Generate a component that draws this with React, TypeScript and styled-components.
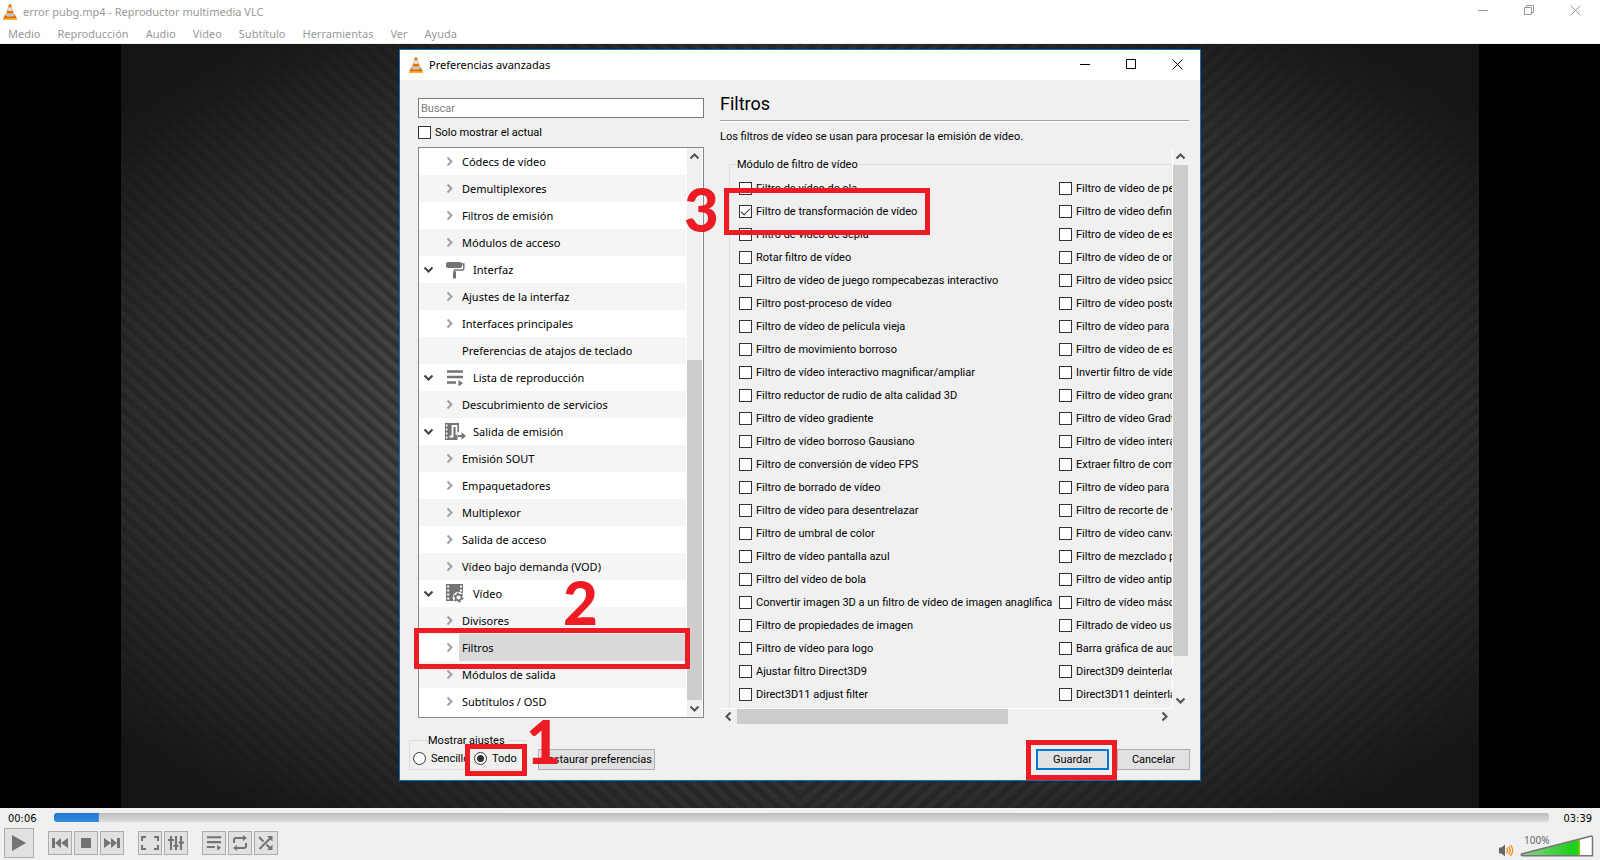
import React from 'react';
import styled, { createGlobalStyle, css } from 'styled-components';

const GlobalStyle = createGlobalStyle`
  *, *::before, *::after { box-sizing: border-box; }
  body { margin: 0; background: #000; }
  button, input { font: inherit; color: inherit; margin: 0; }
`;

const uiFont = "'Noto Sans', 'Open Sans', sans-serif";
const dialogFont = "Roboto, 'Noto Sans', sans-serif";
const timeFont = "'DejaVu Sans Condensed', 'Noto Sans', sans-serif";

/* ---------- main window ---------- */

const Window = styled.div`
  display: flex;
  flex-direction: column;
  min-height: 100vh;
  font: 11px/16px ${uiFont};
  color: #000;
`;

const TitleBar = styled.header`
  display: flex;
  align-items: center;
  height: 24px;
  padding: 0 2px 0 3px;
  background: #fff;
  color: #999;
`;

const Title = styled.h1`
  flex: 1;
  margin: 0 0 0 6px;
  font-size: 11px;
  font-weight: 400;
`;

const WindowButton = styled.button`
  display: grid;
  place-items: center;
  align-self: flex-start;
  width: 46px;
  height: 20px;
  padding: 0;
  border: 0;
  background: none;
`;

const MenuBar = styled.nav`
  display: flex;
  gap: 1px;
  height: 20px;
  background: #fff;
  border-bottom: 1px solid #f0f0f0;
`;

const MenuItem = styled.button`
  padding: 0 8px;
  border: 0;
  background: none;
  color: #999;
`;

const Stage = styled.main`
  position: relative;
  flex: 1;
  display: flex;
  justify-content: center;
  align-items: flex-start;
  padding: 5px 0 27px;
  background: #000;
`;

const Video = styled.div`
  position: absolute;
  inset: 0;
  margin: auto;
  height: 100%;
  max-width: 100%;
  aspect-ratio: 16 / 9;
  display: flex;
  background: #303030;

  &::after {
    content: '';
    position: absolute;
    inset: 0;
    background: radial-gradient(ellipse 64% 66% at center, transparent 35%, rgba(26, 26, 26, 0.6) 75%, #151515 100%);
  }
`;

const VideoHalf = styled.div<{ $angle: number }>`
  flex: 1;
  background: repeating-linear-gradient(
    ${(p) => p.$angle}deg,
    rgba(255, 255, 255, 0.01) 0,
    rgba(255, 255, 255, 0.17) 6px,
    rgba(255, 255, 255, 0.01) 11px
  );
`;

/* ---------- dialog ---------- */

const Dialog = styled.section`
  position: relative;
  width: min(802px, 100%);
  border: 1px solid #1a6cb0;
  background: #f0f0f0;
  font: 11px/15px ${dialogFont};
`;

const DialogBar = styled.header`
  display: flex;
  align-items: center;
  height: 30px;
  padding-left: 9px;
  background: #fff;

  ${WindowButton} {
    height: 28px;
  }
`;

const DialogTitle = styled.h2`
  flex: 1;
  margin: 0 0 0 6px;
  font: 11px/16px ${uiFont};
`;

const DialogBody = styled.div`
  display: flex;
  gap: 16px;
  padding: 0 11px 0 18px;
`;

const Sidebar = styled.div`
  flex: 0 0 286px;
  display: flex;
  flex-direction: column;
  gap: 8px;
  padding-top: 18px;
`;

const SearchInput = styled.input`
  width: 100%;
  height: 20px;
  padding: 1px 2px 0;
  border: 1px solid #7a7a7a;
  outline: 0;
  background: #fff;

  &::placeholder {
    color: #808080;
    opacity: 1;
  }
`;

const Choice = styled.label<{ $gap: number }>`
  display: flex;
  align-items: center;
  gap: ${(p) => p.$gap}px;
  height: 13px;
  white-space: nowrap;
`;

const box = css`
  appearance: none;
  flex: none;
  display: grid;
  place-content: center;
  width: 13px;
  height: 13px;
  border: 1px solid #333;
  background: #fff;
`;

const CheckBox = styled.input`
  ${box}

  &:checked::after {
    content: '';
    width: 9px;
    height: 5px;
    margin-bottom: 3px;
    border: solid #333;
    border-width: 0 0 1px 1px;
    transform: rotate(-45deg);
  }
`;

const Radio = styled.input`
  ${box}
  border-radius: 50%;

  &:checked::after {
    content: '';
    width: 7px;
    height: 7px;
    border-radius: 50%;
    background: #333;
  }
`;

const TreeFrame = styled.div`
  display: flex;
  padding-right: 1px;
  border: 1px solid #828790;
  background: #fff;
`;

const Tree = styled.ul`
  flex: 1;
  margin: 0 1px 0 0;
  padding: 0 0 2px;
  list-style: none;
  font: 11px/27px ${uiFont};
`;

const TreeRow = styled.li<{ $child: boolean }>`
  display: flex;
  height: 27px;
  padding-left: ${(p) => (p.$child ? 20 : 0)}px;

  &:nth-child(even) {
    background: #f5f5f5;
  }
`;

const TreeArrow = styled.span<{ $width: number }>`
  flex: 0 0 ${(p) => p.$width}px;
  display: grid;
  place-items: center;
`;

const TreeIcon = styled.span`
  display: grid;
  place-items: center;
  width: 24px;
  margin: 0 6px 0 6px;
`;

const TreeLabel = styled.span<{ $child: boolean; $selected: boolean }>`
  flex: 1;
  padding-left: ${(p) => (p.$child ? 3 : 0)}px;
  background: ${(p) => (p.$selected ? '#d9d9d9' : 'none')};
`;

const ScrollBar = styled.div<{ $horizontal?: boolean }>`
  display: flex;
  flex-direction: ${(p) => (p.$horizontal ? 'row' : 'column')};
  ${(p) => (p.$horizontal ? 'height' : 'width')}: 15px;
  background: #f0f0f0;
`;

const ScrollButton = styled.button`
  display: grid;
  place-items: center;
  flex: 0 0 17px;
  padding: 0;
  border: 0;
  background: none;
`;

const ScrollSpace = styled.div<{ $grow: number }>`
  flex: ${(p) => p.$grow} 1 0;
`;

const ScrollThumb = styled(ScrollSpace)`
  background: #cdcdcd;
`;

const Panel = styled.div`
  flex: 1;
  min-width: 0;
  padding-top: 10px;
`;

const PanelTitle = styled.h3`
  margin: 0 0 2px;
  font-size: 18px;
  font-weight: 400;
  line-height: 28px;
`;

const Rule = styled.hr`
  height: 2px;
  margin: 0 0 7px;
  border: solid;
  border-width: 1px 0;
  border-color: #a0a0a0 #fff #fff;
`;

const PanelText = styled.p`
  margin: 0 0 3px;
  line-height: 16px;
`;

const ScrollArea = styled.div`
  display: grid;
  grid-template-columns: minmax(0, 1fr) 15px;
  padding-right: 1px;
`;

const View = styled.div`
  overflow: hidden;
  padding: 9px 0 0 9px;
  border: solid #fff;
  border-width: 0 1px 1px 0;
`;

const ModuleGroup = styled.fieldset`
  width: 640px;
  margin: 0;
  padding: 5px 0 2px 9px;
  border: solid #dcdcdc;
  border-width: 1px 0 0 1px;
`;

const Legend = styled.legend<{ $indent: number }>`
  margin-left: ${(p) => p.$indent}px;
  padding: 0 2px 0 1px;
`;

const ModuleColumns = styled.div`
  display: grid;
  grid-template-columns: 320px 320px;
`;

const ModuleColumn = styled.div`
  display: grid;
  grid-auto-rows: 23px;
  align-items: center;
`;

const DialogFooter = styled.footer`
  display: flex;
  align-items: flex-end;
  height: 56px;
  padding: 0 10px 10px 9px;
`;

const ModeGroup = styled.fieldset`
  display: block;
  width: 116px;
  margin: 0 13px 0 0;
  padding: 4px 3px;
  border: 1px solid #dcdcdc;
`;

const ModeOptions = styled.div`
  display: grid;
  grid-template-columns: 61px auto;
`;

const PushButton = styled.button<{ $width: number; $primary?: boolean }>`
  width: ${(p) => p.$width}px;
  height: 21px;
  padding: 0;
  border: ${(p) => (p.$primary ? '2px solid #0078d7' : '1px solid #adadad')};
  background: #e1e1e1;
  white-space: nowrap;
`;

const FooterActions = styled.div`
  display: flex;
  gap: 8px;
  margin-left: auto;
`;

/* ---------- tutorial marks drawn over the dialog ---------- */

const Mark = styled.div<{ $x: number; $y: number; $w: number; $h: number }>`
  position: absolute;
  left: ${(p) => p.$x}px;
  top: ${(p) => p.$y}px;
  width: ${(p) => p.$w}px;
  height: ${(p) => p.$h}px;
  border: 5px solid #ed1c24;
  pointer-events: none;
`;

const Step = styled.span<{ $x: number; $y: number }>`
  position: absolute;
  left: ${(p) => p.$x}px;
  top: ${(p) => p.$y}px;
  color: #ed1c24;
  font: 900 60px/60px Lato, sans-serif;
  pointer-events: none;
`;

/* ---------- player controls ---------- */

const Controls = styled.footer`
  height: 52px;
  padding-top: 2px;
  background: #f0f0f0;
`;

const SeekRow = styled.div`
  display: flex;
  align-items: center;
  height: 16px;
  padding: 0 8px;
  font: 11px/16px ${timeFont};
`;

const Time = styled.time`
  width: 46px;
  margin-top: 2px;

  &:last-child {
    width: 43px;
    text-align: right;
  }
`;

const Seek = styled.input<{ $played: number }>`
  appearance: none;
  flex: 1;
  min-width: 0;
  height: 9px;
  margin-bottom: 2px;
  border-radius: 3px;
  background:
    linear-gradient(#2378cc, #318ae0) 0 0 / ${(p) => p.$played}% 100% no-repeat,
    linear-gradient(#bcbcbc, #dedede);

  &::-webkit-slider-thumb {
    appearance: none;
    width: 0;
    height: 0;
  }
`;

const ButtonRow = styled.div`
  display: flex;
  align-items: center;
  height: 34px;
  padding: 0 6px 0 4px;
`;

const ButtonGroup = styled.div`
  display: flex;
  gap: 2px;
  margin-right: 14px;
`;

const ToolButton = styled.button<{ $size: number }>`
  display: grid;
  place-items: center;
  width: ${(p) => p.$size}px;
  height: ${(p) => p.$size}px;
  padding: 0;
  border: 1px solid #adadad;
  background: #e1e1e1;
`;

const Volume = styled.div`
  display: flex;
  align-items: flex-end;
  gap: 6px;
  margin-left: auto;
`;

const MuteButton = styled.button`
  display: block;
  height: 13px;
  padding: 0;
  border: 0;
  background: none;
`;

const VolumeMeter = styled.label`
  position: relative;
  width: 74px;
  height: 28px;
  padding: 5px 0 0 4px;
  color: #666;
  font: 10px/12px ${uiFont};

  svg,
  input {
    position: absolute;
    left: 0;
    bottom: 0;
  }

  input {
    width: 74px;
    height: 22px;
    opacity: 0;
  }
`;

/* ---------- icons ---------- */

const Cone = () => (
  <svg width="14" height="16" viewBox="0 0 14 16" aria-hidden="true">
    <path d="M2 10.500h10l1.800 4.200q.2 1.300-1 1.300H1.200q-1.200 0-1-1.300z" fill="#e06c00" />
    <path d="M.4 14.200h13.200l.3.800q0 1-1 1H1.100q-1 0-1-1z" fill="#ffb030" />
    <path d="M6 .6q1-1 2 0l3.600 11.400q-4.600 2.600-9.200 0z" fill="#ea7200" />
    <path d="M5.200 3.200h3.600l1 3.200q-2.800 1.200-5.600 0z" fill="#dcdcdc" />
    <path d="M3.400 8.800q3.600 1.600 7.200 0l.9 2.900q-4.500 2.200-9 0z" fill="#c4c4c4" />
  </svg>
);

const Chevron = ({ turn, color = '#505050' }: { turn: number; color?: string }) => (
  <svg width="11" height="11" viewBox="0 0 11 11" aria-hidden="true">
    <path d="M1.500 3.500 5.500 7.500 9.500 3.500" transform={`rotate(${turn} 5.500 5.500)`} fill="none" stroke={color} strokeWidth="2" />
  </svg>
);

const Minimize = ({ color }: { color: string }) => (
  <svg width="10" height="10"><path d="M0 5.500h10" stroke={color} /></svg>
);
const Maximize = ({ color }: { color: string }) => (
  <svg width="10" height="10"><path d="M.5.5h9v9h-9z" fill="none" stroke={color} /></svg>
);
const Restore = ({ color }: { color: string }) => (
  <svg width="10" height="10"><path d="M.5 2.500h7v7h-7zM2.500 2.500v-2h7v7h-2" fill="none" stroke={color} /></svg>
);
const Close = ({ color }: { color: string }) => (
  <svg width="11" height="11"><path d="M.5.5l10 10M10.500.5l-10 10" fill="none" stroke={color} /></svg>
);

const gray = '#737373';

const Roller = () => (
  <svg width="20" height="18" viewBox="0 0 20 18">
    <rect x="1" y="1" width="16" height="6" rx="2" fill={gray} />
    <path d="M16 3h2.800v4.500q0 1.500-1.500 1.500H9.500v3" fill="none" stroke={gray} strokeWidth="1.500" />
    <rect x="8" y="10.500" width="3" height="7" fill={gray} />
  </svg>
);
const Playlist = ({ size = 18 }: { size?: number }) => (
  <svg width={size} height={size} viewBox="0 0 18 18">
    <path d="M1 2.500h16M1 8h16M1 13.500h9" stroke={gray} strokeWidth="2.400" />
    <path d="M12.500 11v6.500l4.500-3.200z" fill={gray} />
  </svg>
);
const FilmBase = () => (
  <path
    fill={gray}
    fillRule="evenodd"
    d="M0 0h17v17H0zM1.200 1.500v2h2v-2zM1.200 5.500v2h2v-2zM1.200 9.500v2h2v-2zM1.200 13.500v2h2v-2zM14 1.500v2h2v-2zM14 5.500v2h2v-2z"
  />
);
const StreamOut = () => (
  <svg width="22" height="18" viewBox="0 0 22 18">
    <path
      fill={gray}
      fillRule="evenodd"
      d="M1 0h14v17H1zM2 1.500v2h1.500v-2zM2 5.500v2h1.500v-2zM2 9.500v2h1.500v-2zM2 13.500v2h1.500v-2z"
    />
    <path d="M5.500 13.500h3V3h4v9" fill="none" stroke="#fff" strokeWidth="1.800" />
    <path d="M13.500 9h9v9h-9z" fill="#fff" />
    <path d="M14 12h3.500V9.300L22 13l-4.500 3.700V14H14z" fill={gray} />
  </svg>
);
const VideoGear = () => (
  <svg width="18" height="19" viewBox="0 0 18 19">
    <FilmBase />
    <circle cx="12.500" cy="13.500" r="5.800" fill="#fff" />
    <circle cx="12.500" cy="13.500" r="2.900" fill="none" stroke={gray} strokeWidth="1.600" />
    <circle cx="12.500" cy="13.500" r="4.200" fill="none" stroke={gray} strokeWidth="1.600" strokeDasharray="2.200 2.200" />
  </svg>
);

const Play = () => <svg width="14" height="16"><path d="M0 0v16l14-8z" fill={gray} /></svg>;
const Previous = () => (
  <svg width="16" height="10"><path d="M0 0h3v10H0zM9 0v10L3 5zM16 0v10L9 5z" fill={gray} /></svg>
);
const Next = () => (
  <svg width="16" height="10"><path d="M13 0h3v10h-3zM7 0v10l6-5zM0 0v10l7-5z" fill={gray} /></svg>
);
const Stop = () => <svg width="10" height="10"><path d="M0 0h10v10H0z" fill={gray} /></svg>;
const Fullscreen = () => (
  <svg width="18" height="14"><path d="M1 5V1h4M13 1h4v4M17 9v4h-4M5 13H1V9" fill="none" stroke={gray} strokeWidth="2.200" /></svg>
);
const Equalizer = () => (
  <svg width="16" height="14">
    <path d="M3 0v14M8 0v14M13 0v14M0 4h6M5.500 10h5M10.500 6.500h5.500" fill="none" stroke={gray} strokeWidth="2.200" />
  </svg>
);
const Loop = () => (
  <svg width="16" height="16">
    <path d="M2 8V5q0-2 2-2h8M14 8v3q0 2-2 2H4" fill="none" stroke={gray} strokeWidth="2" />
    <path d="M11 0v6l4-3zM5 10v6l-4-3z" fill={gray} />
  </svg>
);
const Shuffle = () => (
  <svg width="16" height="14">
    <path d="M1 1l4.500 4.500M8.500 8.500L13 13M1.500 13L13 1.500" fill="none" stroke={gray} strokeWidth="2" />
    <path d="M9 0h5.500v5.500zM9 14h5.500V8.500z" fill={gray} />
  </svg>
);
const Speaker = () => (
  <svg width="15" height="13" viewBox="0 0 15 13">
    <path d="M0 3.500h2.500L6 .5v12l-3.500-3H0z" fill="#666" />
    <path d="M7.500 4q2 2.500 0 5M9.500 2.500q3.200 4 0 8M11.500 1q4.500 5.500 0 11" fill="none" stroke="#f58f1a" strokeWidth="1.300" />
  </svg>
);
const VolumeWedge = () => (
  <svg width="74" height="22" viewBox="0 0 74 22">
    <defs>
      <linearGradient id="level">
        <stop offset="0" stopColor="#8fcf8f" />
        <stop offset="0.850" stopColor="#1fd01f" />
        <stop offset="0.960" stopColor="#1fd01f" />
        <stop offset="1" stopColor="#a8c800" />
      </linearGradient>
    </defs>
    <path d="M1 19.500 60 4.500v16.500H1z" fill="url(#level)" />
    <path d="M60 4.500 72.500 1.300V21H60z" fill="#fff" />
    <path d="M1.500 19 70.500 1.200q2-.4 2 1.300V20.800H3q-2.500-.3-1.500-1.800z" fill="none" stroke="#757575" strokeWidth="1.500" />
  </svg>
);

/* ---------- data ---------- */

const menus = ['Medio', 'Reproducción', 'Audio', 'Vídeo', 'Subtítulo', 'Herramientas', 'Ver', 'Ayuda'];

type Node = { label: string; icon?: React.ReactNode; leaf?: boolean; selected?: boolean };

const tree: Node[] = [
  { label: 'Códecs de vídeo' },
  { label: 'Demultiplexores' },
  { label: 'Filtros de emisión' },
  { label: 'Módulos de acceso' },
  { label: 'Interfaz', icon: <Roller /> },
  { label: 'Ajustes de la interfaz' },
  { label: 'Interfaces principales' },
  { label: 'Preferencias de atajos de teclado', leaf: true },
  { label: 'Lista de reproducción', icon: <Playlist /> },
  { label: 'Descubrimiento de servicios' },
  { label: 'Salida de emisión', icon: <StreamOut /> },
  { label: 'Emisión SOUT' },
  { label: 'Empaquetadores' },
  { label: 'Multiplexor' },
  { label: 'Salida de acceso' },
  { label: 'Vídeo bajo demanda (VOD)' },
  { label: 'Vídeo', icon: <VideoGear /> },
  { label: 'Divisores' },
  { label: 'Filtros', selected: true },
  { label: 'Módulos de salida' },
  { label: 'Subtítulos / OSD' },
];

const modules: string[][] = [
  [
    'Filtro de vídeo de ola',
    'Filtro de transformación de vídeo',
    'Filtro de vídeo de sepia',
    'Rotar filtro de vídeo',
    'Filtro de vídeo de juego rompecabezas interactivo',
    'Filtro post-proceso de vídeo',
    'Filtro de vídeo de película vieja',
    'Filtro de movimiento borroso',
    'Filtro de vídeo interactivo magnificar/ampliar',
    'Filtro reductor de rudio de alta calidad 3D',
    'Filtro de vídeo gradiente',
    'Filtro de vídeo borroso Gausiano',
    'Filtro de conversión de vídeo FPS',
    'Filtro de borrado de vídeo',
    'Filtro de vídeo para desentrelazar',
    'Filtro de umbral de color',
    'Filtro de vídeo pantalla azul',
    'Filtro del vídeo de bola',
    'Convertir imagen 3D a un filtro de vídeo de imagen anaglífica',
    'Filtro de propiedades de imagen',
    'Filtro de vídeo para logo',
    'Ajustar filtro Direct3D9',
    'Direct3D11 adjust filter',
  ],
  [
    'Filtro de vídeo de perspectiva',
    'Filtro de vídeo definido',
    'Filtro de vídeo de escalado',
    'Filtro de vídeo de orden',
    'Filtro de vídeo psicodélico',
    'Filtro de vídeo posterizado',
    'Filtro de vídeo para movimiento',
    'Filtro de vídeo de espejo',
    'Invertir filtro de vídeo',
    'Filtro de vídeo grande',
    'Filtro de vídeo Gradfun',
    'Filtro de vídeo interactivo',
    'Extraer filtro de componente',
    'Filtro de vídeo para color',
    'Filtro de recorte de vídeo',
    'Filtro de vídeo canvas',
    'Filtro de mezclado para vídeo',
    'Filtro de vídeo antiparpadeo',
    'Filtro de vídeo máscara alfa',
    'Filtrado de vídeo usando',
    'Barra gráfica de audio',
    'Direct3D9 deinterlace filter',
    'Direct3D11 deinterlace filter',
  ],
];

/* ---------- page ---------- */

export default function App() {
  return (
    <Window>
      <GlobalStyle />
      <TitleBar>
        <Cone />
        <Title>error pubg.mp4 - Reproductor multimedia VLC</Title>
        <WindowButton aria-label="Minimizar"><Minimize color="#999" /></WindowButton>
        <WindowButton aria-label="Restaurar"><Restore color="#999" /></WindowButton>
        <WindowButton aria-label="Cerrar"><Close color="#999" /></WindowButton>
      </TitleBar>
      <MenuBar>
        {menus.map((m) => <MenuItem key={m}>{m}</MenuItem>)}
      </MenuBar>

      <Stage>
        <Video>
          <VideoHalf $angle={42} />
          <VideoHalf $angle={-42} />
        </Video>

        <Dialog role="dialog" aria-label="Preferencias avanzadas">
          <DialogBar>
            <Cone />
            <DialogTitle>Preferencias avanzadas</DialogTitle>
            <WindowButton aria-label="Minimizar"><Minimize color="#000" /></WindowButton>
            <WindowButton aria-label="Maximizar"><Maximize color="#000" /></WindowButton>
            <WindowButton aria-label="Cerrar"><Close color="#000" /></WindowButton>
          </DialogBar>

          <DialogBody>
            <Sidebar>
              <SearchInput placeholder="Buscar" aria-label="Buscar" />
              <Choice $gap={4}>
                <CheckBox type="checkbox" />
                Solo mostrar el actual
              </Choice>
              <TreeFrame>
                <Tree role="tree">
                  {tree.map((n) => (
                    <TreeRow key={n.label} $child={!n.icon} role="treeitem" aria-selected={!!n.selected}>
                      <TreeArrow $width={n.icon ? 18 : 20}>
                        {!n.leaf && <Chevron turn={n.icon ? 0 : -90} color={n.icon ? '#404040' : '#a0a0a0'} />}
                      </TreeArrow>
                      {n.icon && <TreeIcon>{n.icon}</TreeIcon>}
                      <TreeLabel $child={!n.icon} $selected={!!n.selected}>{n.label}</TreeLabel>
                    </TreeRow>
                  ))}
                </Tree>
                <ScrollBar>
                  <ScrollButton aria-label="Subir"><Chevron turn={180} /></ScrollButton>
                  <ScrollSpace $grow={195} />
                  <ScrollThumb $grow={340} />
                  <ScrollButton aria-label="Bajar"><Chevron turn={0} /></ScrollButton>
                </ScrollBar>
              </TreeFrame>
            </Sidebar>

            <Panel>
              <PanelTitle>Filtros</PanelTitle>
              <Rule />
              <PanelText>Los filtros de vídeo se usan para procesar la emisión de vídeo.</PanelText>
              <ScrollArea>
                <View>
                  <ModuleGroup>
                    <Legend $indent={-3}>Módulo de filtro de vídeo</Legend>
                    <ModuleColumns>
                      {modules.map((column, i) => (
                        <ModuleColumn key={i}>
                          {column.map((name) => (
                            <Choice key={name} $gap={4}>
                              <CheckBox type="checkbox" defaultChecked={name.includes('transformación')} />
                              {name}
                            </Choice>
                          ))}
                        </ModuleColumn>
                      ))}
                    </ModuleColumns>
                  </ModuleGroup>
                </View>
                <ScrollBar>
                  <ScrollButton aria-label="Subir"><Chevron turn={180} /></ScrollButton>
                  <ScrollThumb $grow={490} />
                  <ScrollSpace $grow={36} />
                  <ScrollButton aria-label="Bajar"><Chevron turn={0} /></ScrollButton>
                </ScrollBar>
                <ScrollBar $horizontal>
                  <ScrollButton aria-label="Izquierda"><Chevron turn={90} /></ScrollButton>
                  <ScrollThumb $grow={270} />
                  <ScrollSpace $grow={148} />
                  <ScrollButton aria-label="Derecha"><Chevron turn={-90} /></ScrollButton>
                </ScrollBar>
              </ScrollArea>
            </Panel>
          </DialogBody>

          <DialogFooter>
            <ModeGroup>
              <Legend $indent={14}>Mostrar ajustes</Legend>
              <ModeOptions>
                <Choice $gap={5}>
                  <Radio type="radio" name="mode" />
                  Sencillo
                </Choice>
                <Choice $gap={5}>
                  <Radio type="radio" name="mode" defaultChecked />
                  Todo
                </Choice>
              </ModeOptions>
            </ModeGroup>
            <PushButton $width={117}>Restaurar preferencias</PushButton>
            <FooterActions>
              <PushButton $width={73} $primary>Guardar</PushButton>
              <PushButton $width={73}>Cancelar</PushButton>
            </FooterActions>
          </DialogFooter>

          <Mark $x={324} $y={138} $w={206} $h={47} />
          <Mark $x={14} $y={578} $w={276} $h={41} />
          <Mark $x={65} $y={694} $w={62} $h={32} />
          <Mark $x={626} $y={690} $w={91} $h={40} />
          <Step $x={284} $y={129}>3</Step>
          <Step $x={163} $y={522}>2</Step>
          <Step $x={126} $y={661}>1</Step>
        </Dialog>
      </Stage>

      <Controls>
        <SeekRow>
          <Time>00:06</Time>
          <Seek type="range" aria-label="Posición" defaultValue={3} $played={3} />
          <Time>03:39</Time>
        </SeekRow>
        <ButtonRow>
          <ButtonGroup>
            <ToolButton $size={30} aria-label="Reproducir"><Play /></ToolButton>
          </ButtonGroup>
          <ButtonGroup>
            <ToolButton $size={24} aria-label="Anterior"><Previous /></ToolButton>
            <ToolButton $size={24} aria-label="Detener"><Stop /></ToolButton>
            <ToolButton $size={24} aria-label="Siguiente"><Next /></ToolButton>
          </ButtonGroup>
          <ButtonGroup>
            <ToolButton $size={24} aria-label="Pantalla completa"><Fullscreen /></ToolButton>
            <ToolButton $size={24} aria-label="Ajustes extendidos"><Equalizer /></ToolButton>
          </ButtonGroup>
          <ButtonGroup>
            <ToolButton $size={24} aria-label="Lista de reproducción"><Playlist size={16} /></ToolButton>
            <ToolButton $size={24} aria-label="Repetir"><Loop /></ToolButton>
            <ToolButton $size={24} aria-label="Aleatorio"><Shuffle /></ToolButton>
          </ButtonGroup>
          <Volume>
            <MuteButton aria-label="Silenciar"><Speaker /></MuteButton>
            <VolumeMeter>
              100%
              <VolumeWedge />
              <input type="range" aria-label="Volumen" defaultValue={80} />
            </VolumeMeter>
          </Volume>
        </ButtonRow>
      </Controls>
    </Window>
  );
}
